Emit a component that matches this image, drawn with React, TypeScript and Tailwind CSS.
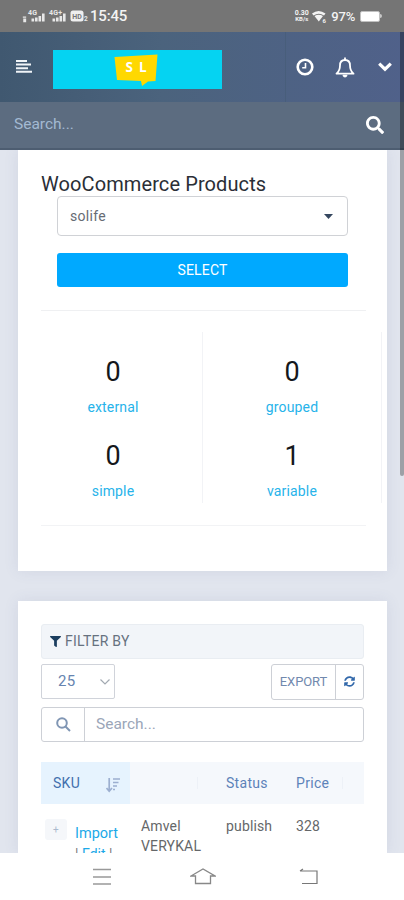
import React from 'react';
import { FaFilter, FaSearch, FaSyncAlt } from 'react-icons/fa';

interface Stat {
  value: number;
  label: string;
}

const leftStats: Stat[] = [
  { value: 0, label: 'external' },
  { value: 0, label: 'simple' },
];

const rightStats: Stat[] = [
  { value: 0, label: 'grouped' },
  { value: 1, label: 'variable' },
];

const SignalBars: React.FC<{ label: string }> = ({ label }) => (
  <svg className="w-[19px] h-[14px] shrink-0" viewBox="0 0 19 14" fill="#e8e8e8">
    <text x="1" y="6" fontSize="7" fontWeight="700" fontFamily="Roboto" textLength={label.length > 2 ? 13 : 9}>{label}</text>
    <rect x="4.5" y="9.5" width="2.6" height="3" />
    <rect x="8" y="8.5" width="2.6" height="4" />
    <rect x="11.5" y="7" width="2.6" height="5.5" />
    <rect x="15" y="4.5" width="2.6" height="8" />
  </svg>
);

const StatusBar: React.FC = () => (
  <div className="h-8 bg-[#757575] text-[#f3f3f3] flex items-center pl-[22px] pr-[22px] shrink-0">
    <svg className="w-[5px] h-[7px] mt-1.5" viewBox="0 0 6 7" fill="#e8e8e8">
      <path d="M1 0h4v1.500H1zM1.500 2.200h3.500v4.500H1.500z" />
    </svg>
    <SignalBars label="4G" />
    <div className="w-[2px]" />
    <SignalBars label="4G+" />
    <svg className="w-[19px] h-[12px] ml-[3px]" viewBox="0 0 19 12">
      <rect x="0.500" y="0.500" width="13" height="11" rx="2.500" fill="#efefef" />
      <text x="2.200" y="8.500" fontSize="7" fontWeight="700" fontFamily="Roboto" fill="#777" textLength="9.500">HD</text>
      <text x="14" y="11.300" fontSize="6.500" fontWeight="700" fontFamily="Roboto" fill="#e8e8e8">2</text>
    </svg>
    <span className="text-[15px] font-medium tracking-[-0.2px] leading-none ml-px">15:45</span>
    <div className="ml-auto flex items-center">
      <div className="text-[7px] font-bold leading-[6.500px] text-center w-[17px]">
        <div>0.30</div>
        <div className="text-[6px]">KB/s</div>
      </div>
      <svg className="w-[15px] h-[13px] ml-[2px]" viewBox="0 0 15 13" fill="#f3f3f3">
        <path d="M0 3.500Q6.500-1.500 13.500 3.500L12 5.500Q6.800 2 1.500 5.500Z" />
        <path d="M2.500 6Q6.800 3.500 11 6L6.800 11.500Z" />
        <text x="10.500" y="12.500" fontSize="6" fontWeight="700" fontFamily="Roboto">6</text>
      </svg>
      <span className="ml-[4px] text-[13px] font-medium leading-none tracking-[-0.2px]">97%</span>
      <div className="ml-[5px] w-[20px] h-[11px] rounded-[2px] border border-[#c0c0c0] bg-white" />
      <div className="w-[2px] h-1 bg-[#c8c8c8] rounded-r" />
    </div>
  </div>
);

const Header: React.FC = () => (
  <header className="shrink-0">
    <div className="h-[70px] bg-linear-to-r from-[#405870] via-[#4b637d] via-40% to-[#50618a] flex items-center">
      <svg className="w-4 h-[13px] ml-4 mt-[-1px]" viewBox="0 0 16 13" fill="#f0f4f8">
        <path d="M0 0h11v2H0zM0 3.600h15v2H0zM0 7.200h12v2H0zM0 10.800h16v2H0z" />
      </svg>
      <div className="ml-[21px] w-[169px] h-[39px] mt-[5px] bg-[#05d3f2]">
        <svg className="w-[45px] h-[33px] ml-[61px] mt-[4px]" viewBox="0 0 45 33">
          <path d="M0.500 3L43.500 0.500L41.500 27L34 27.500L28 32L27 27L3 26Z" fill="#ffd800" />
          <text x="11.500" y="17.500" fontSize="13.500" fontWeight="700" fontFamily="Open Sans" fill="#fff">S</text>
          <text x="25" y="17.500" fontSize="13.500" fontWeight="700" fontFamily="Open Sans" fill="#fff">L</text>
        </svg>
      </div>
      <div className="ml-[63px] h-full w-[119px] flex items-center border-l border-[#485e7b]">
        {/* Clock */}
        <svg className="w-[18px] h-[18px] ml-[10px]" viewBox="0 0 18 18" fill="none" stroke="#fff">
          <circle cx="9" cy="9" r="7.300" strokeWidth="2.600" />
          <path d="M9.500 5v4.800H6.200" strokeWidth="1.600" />
        </svg>
        {/* Bell */}
        <svg className="w-[20px] h-[21px] ml-[21px]" viewBox="0 0 20 21" fill="none" stroke="#fff" strokeWidth="1.800" strokeLinejoin="round">
          <path d="M10 3C6.500 3 5 5.500 5 8.500C5 12.500 3.700 14.700 1.500 16.700H18.500C16.300 14.700 15 12.500 15 8.500C15 5.500 13.500 3 10 3Z" />
          <path d="M10 0.500V3" />
          <path d="M7.800 18H12.200Q12 20.200 10 20.200T7.800 18Z" fill="#fff" strokeWidth="0.500" />
        </svg>
        <svg className="w-[14px] h-[10px] ml-[23px]" viewBox="0 0 14 10" fill="none" stroke="#fff" strokeWidth="3.200">
          <path d="M1.200 1.700L7 7.200L12.800 1.700" />
        </svg>
      </div>
    </div>
    <div className="h-12 bg-[#5c6c80] border-b-2 border-[#4d5d71] flex items-center justify-between pl-[14px] pr-[20px]">
      <span className="text-[15.500px] text-[#a3b9d2]">Search...</span>
      <FaSearch className="w-[18px] h-[18px] text-white" />
    </div>
  </header>
);

const StatColumn: React.FC<{ stats: Stat[] }> = ({ stats }) => (
  <div className="flex flex-col pt-[20px] h-[171px] w-[179px] border-r border-[#f2f3f6]">
    {stats.map((stat) => (
      <div key={stat.label} className="h-[84px] shrink-0 flex flex-col items-center">
        <div className="h-[40px] flex items-center text-[27px] text-[#14171c]">{stat.value}</div>
        <div className="mt-[6px] h-[18px] leading-[18px] text-[14px] text-[#27b3ea] tracking-[0.15px]">{stat.label}</div>
      </div>
    ))}
  </div>
);

const ProductsCard: React.FC = () => (
  <section className="h-[421px] shrink-0 bg-white px-[23px] pt-[22px] shadow-[0_0_14px_rgba(80,90,140,0.1)]">
    <h1 className="text-[20px] leading-6 text-[#2a2e36] whitespace-nowrap tracking-[0.1px]">WooCommerce Products</h1>
    <div className="mx-4 h-10 w-[291px] border border-[#d0d2d6] rounded-[4px] px-3 pr-[14px] flex items-center justify-between text-[14px] text-[#666b74] tracking-[0.3px]">
      <span>solife</span>
      <svg className="w-[9px] h-[5px]" viewBox="0 0 9 5" fill="#35475f">
        <path d="M0 0h9L4.500 5z" />
      </svg>
    </div>
    <button className="block mx-4 mt-[17px] h-[34px] w-[291px] rounded-[3px] bg-[#00a9ff] text-[14px] text-white tracking-[0.2px]">SELECT</button>
    <div className="mt-[23px] h-px w-[325px] bg-[#eff0f2]" />
    <div className="mt-[21px] -ml-[17px] w-[358px] flex">
      <StatColumn stats={leftStats} />
      <StatColumn stats={rightStats} />
    </div>
    <div className="mt-[22px] h-px w-[325px] bg-[#f2f3f5]" />
  </section>
);

const SortIcon: React.FC = () => (
  <svg className="w-[14px] h-[16px]" viewBox="0 0 14 16" fill="none" stroke="#9cafd0" strokeWidth="1.700">
    <path d="M3.200 1v13M0.500 11l2.700 3.200L6 11M7 2h7M7 5.500h5.500M7 9h4M7 12.500h2" />
  </svg>
);

const TableCard: React.FC = () => (
  <section className="mt-[30px] flex-1 min-h-0 overflow-hidden bg-white px-[23px] pt-[23px] shadow-[0_0_14px_rgba(80,90,140,0.1)]">
    <div className="h-[35px] w-[323px] rounded-[3px] border border-[#e9edf2] bg-[#f2f5f9] flex items-center pl-2 text-[14px] text-[#66717f] pb-px tracking-[0.25px]">
      <FaFilter className="w-[11px] h-[11px] text-[#1c3e5f] mr-[4px]" />
      <span>FILTER BY</span>
    </div>
    <div className="mt-[5px] w-[323px] flex justify-between">
      <div className="w-[74px] h-[35px] border border-[#d0d3da] rounded-[2px] flex items-center justify-between pl-[16px] pr-[4px] text-[15px] text-[#6684b0] tracking-[0.3px]">
        <span>25</span>
        <svg className="w-[10px] h-[6px]" viewBox="0 0 10 6" fill="none" stroke="#a3aab2" strokeWidth="1.200">
          <path d="M0.500 0.500L5 5l4.500-4.500" />
        </svg>
      </div>
      <div className="w-[93px] h-[36px] border border-[#cdd0d6] rounded-[3px] flex text-[#7189ae]">
        <div className="w-[64px] border-r border-[#cdd0d6] flex items-center justify-center text-[13px] tracking-[-0.1px]">EXPORT</div>
        <div className="flex-1 flex items-center justify-center pb-[2px]">
          <FaSyncAlt className="w-[11px] h-[11px] text-[#3268aa]" />
        </div>
      </div>
    </div>
    <div className="mt-[7px] w-[323px] h-[35px] border border-[#cdd0d6] rounded-[3px] flex items-center">
      <div className="w-[43px] h-full border-r border-[#cdd0d6] flex items-center justify-center">
        <svg className="w-[15px] h-[15px]" viewBox="0 0 15 15" fill="none" stroke="#8096b4" strokeWidth="2">
          <circle cx="6" cy="6" r="4.800" />
          <path d="M9.500 9.500L14 14" />
        </svg>
      </div>
      <span className="pl-[11px] text-[15.500px] text-[#9ba6b8]">Search...</span>
    </div>
    <div className="mt-5 w-[323px] h-[42px] bg-[#f5f8fc] flex items-center text-[14px] text-[#5d83b9] tracking-[0.3px]">
      <div className="w-[89px] h-full bg-[#e6f3fe] flex items-center justify-between pl-3 pr-[10px]">
        <span className="text-[#426fad]">SKU</span>
        <div className="pt-1"><SortIcon /></div>
      </div>
      <div className="w-[96px] flex justify-end pr-[28px]">
        <div className="w-px h-3 bg-[#edf1f7]" />
      </div>
      <div className="w-[70px]">Status</div>
      <div className="w-[46px]">Price</div>
      <div className="w-px h-3 bg-[#edf1f7]" />
    </div>
    <div className="w-[323px] flex text-[14px] leading-5 text-[#656769] pt-[12px] tracking-[0.15px]">
      <div className="w-[34px] pl-1 pt-[3px]">
        <div className="w-[22px] h-[21px] bg-[#f5f7fa] rounded-[3px] flex items-center justify-center text-[10px] leading-none text-[#aab9ce]">+</div>
      </div>
      <div className="w-[66px] pt-[8px] text-[14.500px] text-[#1ba9e8] tracking-normal">
        <div>Import</div>
        <div className="text-[14px] leading-5 whitespace-nowrap"><span className="text-[#777]">|</span> Edit <span className="text-[#777]">|</span></div>
      </div>
      <div className="w-[85px]">
        <div>Amvel</div>
        <div>VERYKAL</div>
      </div>
      <div className="w-[70px]">publish</div>
      <div>328</div>
    </div>
  </section>
);

const NavigationBar: React.FC = () => (
  <nav className="h-[47px] shrink-0 bg-white flex pl-[92px] pt-[14px]">
    <svg className="w-[20px] h-[20px]" viewBox="0 0 20 20" stroke="#999" strokeWidth="1.500">
      <path d="M1 2.500h18M1 10h18M1 17h18" />
    </svg>
    <svg className="w-[26px] h-[20px] ml-[78px]" viewBox="0 0 26 20" fill="none" stroke="#888" strokeWidth="1.300">
      <path d="M1 9L13 2l12 7h-4.500v7.500h-15V9z" />
    </svg>
    <svg className="w-[20px] h-[20px] ml-[83px]" viewBox="0 0 20 20" fill="none" stroke="#777" strokeWidth="1.200">
      <path d="M1 4h17v12.500H3M4 2L1 4" />
    </svg>
  </nav>
);

const App: React.FC = () => {
  return (
    <div className="relative w-[404px] h-[900px] overflow-hidden flex flex-col bg-[#e1e6ef] font-[Roboto,sans-serif]">
      <StatusBar />
      <Header />
      <main className="flex-1 min-h-0 flex flex-col pl-[18px] pr-[17px] bg-[#e1e5ee] overflow-hidden">
        <ProductsCard />
        <TableCard />
      </main>
      <NavigationBar />
      {/* Scrollbar thumb */}
      <div className="absolute right-0 top-[32px] w-[4px] h-[444px] bg-black/30 rounded-b-sm" />
    </div>
  );
};

export default App;
